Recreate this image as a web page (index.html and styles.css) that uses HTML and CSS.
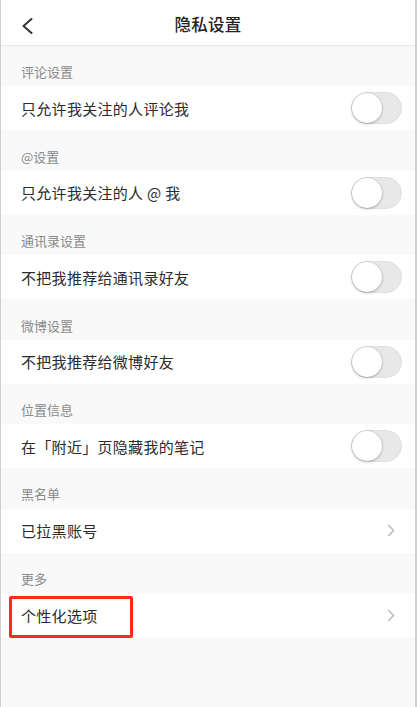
FILE: index.html
```html
<!DOCTYPE html>
<html lang="zh">
<head>
<meta charset="utf-8">
<title>隐私设置</title>
<link rel="stylesheet" href="styles.css">
</head>
<body>
<div class="page">
  <header class="nav">
    <svg class="back" width="12" height="16" viewBox="0 0 12 16"><polyline points="10.5,1 2.5,8 10.5,15" fill="none" stroke="#333" stroke-width="2" stroke-linecap="round" stroke-linejoin="round"/></svg>
    <div class="title">隐私设置</div>
  </header>

  <div class="section">评论设置</div>
  <div class="row"><span class="label">只允许我关注的人评论我</span><span class="switch"><span class="knob"></span></span></div>

  <div class="section">@设置</div>
  <div class="row"><span class="label">只允许我关注的人 @ 我</span><span class="switch"><span class="knob"></span></span></div>

  <div class="section">通讯录设置</div>
  <div class="row"><span class="label">不把我推荐给通讯录好友</span><span class="switch"><span class="knob"></span></span></div>

  <div class="section">微博设置</div>
  <div class="row"><span class="label">不把我推荐给微博好友</span><span class="switch"><span class="knob"></span></span></div>

  <div class="section">位置信息</div>
  <div class="row"><span class="label">在「附近」页隐藏我的笔记</span><span class="switch"><span class="knob"></span></span></div>

  <div class="section">黑名单</div>
  <div class="row"><span class="label">已拉黑账号</span><svg class="chev" width="8" height="13" viewBox="0 0 8 13"><polyline points="1.2,1 6.5,6.5 1.2,12" fill="none" stroke="#bdbdbd" stroke-width="1.6"/></svg></div>

  <div class="section">更多</div>
  <div class="row highlight-row"><span class="label">个性化选项</span><svg class="chev" width="8" height="13" viewBox="0 0 8 13"><polyline points="1.2,1 6.5,6.5 1.2,12" fill="none" stroke="#bdbdbd" stroke-width="1.6"/></svg><span class="mark"></span></div>
</div>
</body>
</html>
```

FILE: styles.css
```css
* { box-sizing: border-box; }
html, body { margin: 0; padding: 0; }
body {
  font-family: "Noto Sans CJK SC", "Noto Sans", sans-serif;
  background: #fafafa;
}
.page {
  width: 417px;
  height: 707px;
  background: #f9f9f9;
  border-left: 1px solid #cfcfcf;
  border-right: 2px solid #cfcfcf;
  overflow: hidden;
}
.nav {
  height: 46px;
  background: #fff;
  border-bottom: 1px solid #e6e6e6;
  display: flex;
  align-items: center;
  justify-content: center;
  position: relative;
  padding-top: 3px;
}
.back {
  position: absolute;
  left: 20px;
  top: 18px;
}
.title {
  font-size: 16.5px;
  font-weight: 500;
  color: #222;
  letter-spacing: 0.3px;
}
.section {
  height: 40.45px;
  padding: 11px 0 0 20px;
  display: flex;
  align-items: center;
  font-size: 13px;
  color: #8a8a8a;
}
.row {
  height: 44px;
  background: #fff;
  display: flex;
  align-items: center;
  justify-content: space-between;
  padding: 0 13px 0 20px;
  position: relative;
}
.label {
  font-size: 15px;
  letter-spacing: 0.3px;
  color: #2b2b2b;
}
.switch {
  width: 51px;
  height: 32px;
  border-radius: 16px;
  background: #e8e8e8;
  border: 1px solid #e0e0e0;
  position: relative;
}
.knob {
  position: absolute;
  left: 0;
  top: 0;
  width: 30px;
  height: 30px;
  border-radius: 50%;
  background: #fff;
  box-shadow: 0 1px 3px rgba(0, 0, 0, 0.25), 0 0 0 0.5px rgba(0, 0, 0, 0.08);
}
.chev { margin-right: 7px; }
.mark {
  position: absolute;
  left: 8px;
  top: 3px;
  width: 124px;
  height: 42px;
  border: 3px solid #ff2a1c;
  border-radius: 2px;
}
```
